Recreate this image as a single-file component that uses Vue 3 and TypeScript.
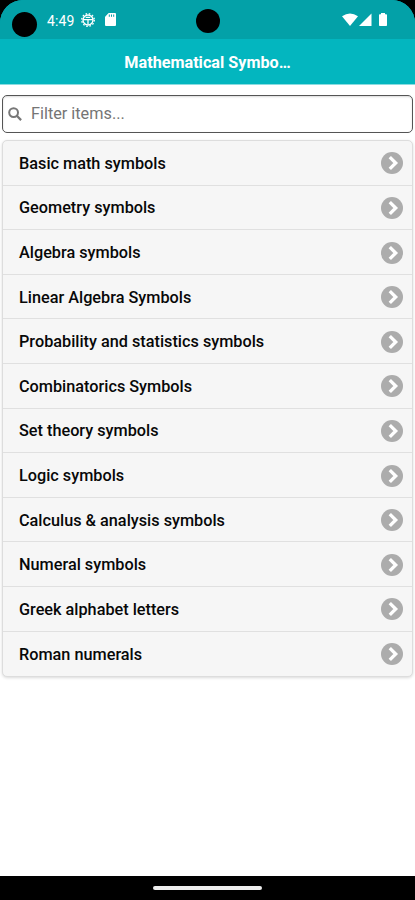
<script setup lang="ts">
import { ref, computed } from 'vue'

const query = ref<string>('')
const categories: string[] = [
  'Basic math symbols',
  'Geometry symbols',
  'Algebra symbols',
  'Linear Algebra Symbols',
  'Probability and statistics symbols',
  'Combinatorics Symbols',
  'Set theory symbols',
  'Logic symbols',
  'Calculus & analysis symbols',
  'Numeral symbols',
  'Greek alphabet letters',
  'Roman numerals',
]
const visible = computed<string[]>(() =>
  categories.filter((c) => c.toLowerCase().includes(query.value.toLowerCase())),
)
</script>

<template>
  <div class="screen">
    <div class="top">
      <div class="status">
        <span class="camera-left"></span>
        <span class="time">4:49</span>
        <svg class="gear" viewBox="0 0 16 16" fill="none" stroke="#fff">
          <circle cx="8" cy="8" r="5" stroke-width="1.4" />
          <circle cx="8" cy="8" r="6.3" stroke-width="1.3" stroke-dasharray="1.6 1.7" />
          <path d="M3 7.6h10M8 7.6v5M5.7 5.4h4.6" stroke-width="1.3" />
        </svg>
        <svg class="sd" viewBox="0 0 11 13">
          <path fill="#fff" d="M3.7 0H10q1 0 1 1v11q0 1-1 1H1q-1 0-1-1V3.7z" />
          <path stroke="#03a1a8" stroke-width="1" d="M4.3 1.5v2.3M6.5 1.5v2.3M8.7 1.5v2.3" />
        </svg>
        <span class="camera"></span>
        <svg class="signals" viewBox="0 0 46 14" fill="#fff">
          <path d="M0 3.3Q8-2.3 16 3.3L8 13z" />
          <path d="M17 13L29.5.5V13z" />
          <path d="M39 0h4v1.3h1.2q.8 0 .8.8v10.1q0 .8-.8.8h-6.4q-.8 0-.8-.8V2.1q0-.8.8-.8H39z" />
        </svg>
      </div>
      <header class="title"><h1>Mathematical Symbo…</h1></header>
    </div>
    <main>
      <label class="search">
        <svg viewBox="0 0 14 14" fill="none" stroke="#777">
          <circle cx="5.6" cy="5.6" r="4.4" stroke-width="2" />
          <path d="M8.8 8.8l4.3 4.3" stroke-width="2.3" />
        </svg>
        <input v-model="query" type="text" placeholder="Filter items..." />
      </label>
      <ul class="list">
        <li v-for="name in visible" :key="name">
          <span>{{ name }}</span>
          <svg viewBox="0 0 22 22">
            <circle cx="11" cy="11" r="11" fill="#acacac" />
            <path d="M8.8 5.1l5.9 5.9-5.9 5.9" fill="none" stroke="#fff" stroke-width="3.3" />
          </svg>
        </li>
      </ul>
    </main>
    <footer><span></span></footer>
  </div>
</template>

<style>
body {
  background: #000;
}
</style>

<style scoped>
.screen {
  height: 900px;
  display: flex;
  flex-direction: column;
  background: #000;
  font-family: Roboto, sans-serif;
  overflow: hidden;
}
.top {
  flex: none;
  border-radius: 23px 23px 0 0;
  overflow: hidden;
  background: #03b6bf;
}
.status {
  height: 39px;
  box-sizing: border-box;
  background: #03a1a8;
  display: flex;
  align-items: center;
  padding: 0 27px 0 12px;
}
.camera-left {
  width: 25px;
  height: 25px;
  border-radius: 50%;
  background: #000;
  margin-top: 9px;
}
.time {
  width: 34px;
  margin-left: 10px;
  color: #fff;
  font-size: 14px;
  line-height: 20px;
  padding-top: 2px;
  letter-spacing: 0.15px;
}
.gear {
  width: 16px;
  height: 16px;
  margin-left: -1px;
}
.sd {
  width: 11px;
  height: 13px;
  margin-left: 9px;
}
.camera {
  width: 24px;
  height: 24px;
  margin-left: 80px;
  margin-top: 3px;
  border-radius: 50%;
  background: #000;
}
.signals {
  width: 46px;
  height: 14px;
  margin-left: auto;
  margin-top: 1px;
}
.title {
  height: 46px;
  display: flex;
  align-items: center;
  justify-content: center;
  border-bottom: 1px solid #8adce0;
  box-sizing: border-box;
  padding-top: 2px;
}
h1 {
  margin: 0;
  color: #fff;
  font-size: 16.2px;
  line-height: 20px;
  font-weight: 700;
}
main {
  flex: 1;
  background: #fff;
  padding: 10px 2px 0;
}
.search {
  height: 38px;
  box-sizing: border-box;
  border: 1px solid #555;
  border-radius: 5px;
  box-shadow: inset 0 1px 2px rgba(0, 0, 0, 0.15);
  display: flex;
  align-items: center;
  padding-left: 5px;
}
.search svg {
  width: 14px;
  height: 14px;
}
.search input {
  flex: 1;
  min-width: 0;
  margin: 0 0 0 9px;
  padding: 0;
  border: 0;
  outline: 0;
  background: transparent;
  font: 400 16.25px/20px Roboto, sans-serif;
  color: #333;
}
.search input::placeholder {
  color: #757575;
}
.list {
  list-style: none;
  margin: 7px 0 0;
  padding: 0;
  border: 1px solid #ddd;
  border-radius: 5px;
  background: #f6f6f6;
  box-shadow: 0 1px 3px rgba(0, 0, 0, 0.15);
}
li {
  height: 44.62px;
  box-sizing: border-box;
  border-bottom: 1px solid #e0e0e0;
  display: flex;
  align-items: center;
  justify-content: space-between;
  padding: 1px 9px 0 16px;
  font-size: 16.25px;
  font-weight: 500;
  line-height: 20px;
  color: #080808;
}
li:last-child {
  border-bottom: 0;
  padding-top: 0;
}
li svg {
  width: 22px;
  height: 22px;
}
li span {
  padding-top: 1px;
}
footer {
  flex: none;
  height: 24px;
  background: #000;
  display: flex;
  align-items: center;
  justify-content: center;
}
footer span {
  width: 109px;
  height: 4px;
  border-radius: 2px;
  background: #eee;
}
</style>
